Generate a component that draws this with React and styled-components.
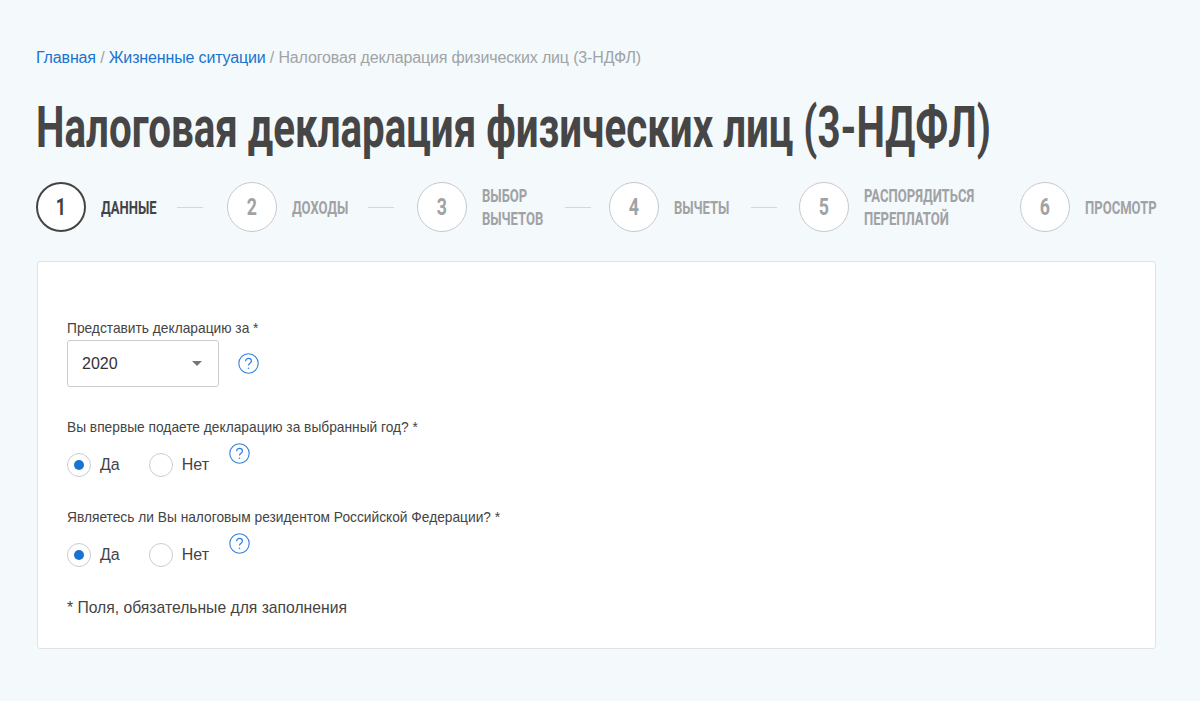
import React from "react";
import styled, { createGlobalStyle } from "styled-components";

const Global = createGlobalStyle`
  html, body { margin: 0; padding: 0; background: #f4f9fc; }
  body { font-family: "Liberation Sans", Arial, sans-serif; color: #444; }
`;
const Page = styled.div`
  width: 1200px; height: 701px; box-sizing: border-box; overflow: hidden;
  padding: 48px 44px 0 36px; background: #f4f9fc;
`;
const Crumbs = styled.nav`
  font-size: 16px; line-height: 18px; color: #a0a4a6; white-space: nowrap; letter-spacing: -0.15px;
  padding-top: 1px;
`;
const Crumb = styled.a`color: #1a73d0; text-decoration: none;`;
const TitleBox = styled.div`margin-top: 29px; height: 64px;`;
const Title = styled.h1`
  margin: 0; display: inline-block; font-family: Roboto, "Liberation Sans", sans-serif;
  font-weight: 700; font-size: 57px; line-height: 64px; color: #464646; white-space: nowrap;
  transform: scaleX(0.707); transform-origin: left center;
`;
const Steps = styled.ol`
  list-style: none; margin: 22px 0 0; padding: 0; display: flex; align-items: center; height: 50px;
`;
const Step = styled.li`display: flex; align-items: center; margin-right: ${p => p.$mr || 0}px;`;
const Circle = styled.span`
  width: 50px; height: 50px; box-sizing: border-box; border-radius: 50%; flex: none;
  display: flex; align-items: center; justify-content: center; background: #fff;
  border: ${p => p.$active ? "2px solid #444" : "1px solid #c6c9cb"};
  color: ${p => p.$active ? "#444" : "#a0a2a4"};
`;
const Digit = styled.span`
  font-family: Roboto, "Liberation Sans", sans-serif; font-weight: 700; font-size: 24px;
  transform: scaleX(0.74);
`;
const StepLabel = styled.span`
  display: block; margin-left: 15px; width: ${p => p.$w}px; flex: none;
  font-family: Roboto, "Liberation Sans", sans-serif;
  font-weight: 700; font-size: 18px; line-height: 23px;
  color: ${p => p.$active ? "#444" : "#a0a2a4"}; white-space: pre;
`;
const StepText = styled.span`
  display: inline-block; transform: scaleX(0.725); transform-origin: left center;
`;
const Connector = styled.span`
  width: 26px; height: 1px; background: #d4d8da; margin: 0 ${p => p.$r}px 0 ${p => p.$l}px; flex: none;
`;
const Card = styled.section`
  margin: 29px 0 0 1px; height: 388px; box-sizing: border-box; background: #fff;
  border: 1px solid #dfe3e6; border-radius: 3px; padding: 58px 29px 0;
`;
const Label = styled.div`font-size: 13.75px; line-height: 17px; color: #444;`;
const SelectRow = styled.div`display: flex; align-items: center; gap: 19px; margin-top: 3px;`;
const Select = styled.div`
  width: 152px; height: 47px; box-sizing: border-box; border: 1px solid #c9cdd0; border-radius: 3px;
  display: flex; align-items: center; justify-content: space-between; padding: 0 15px 0 14px;
  font-size: 16px; color: #333; background: #fff;
`;
const Caret = styled.span`
  width: 0; height: 0; border-left: 5px solid transparent; border-right: 5px solid transparent;
  border-top: 5px solid #777; margin-right: 1px;
`;
const Group = styled.div`margin-top: ${p => p.$mt}px;`;
const RadioRow = styled.div`display: flex; align-items: flex-start; margin-top: 17px; height: 30px;`;
const Radio = styled.label`
  display: flex; align-items: center; font-size: 16px; line-height: 24px; color: #444;
  margin-right: ${p => p.$mr}px;
`;
const Dot = styled.span`
  width: 24px; height: 24px; box-sizing: border-box; border-radius: 50%; border: 1px solid #c9cdd0;
  background: #fff; margin-right: 9px; display: flex; align-items: center; justify-content: center;
  &::after { content: ""; width: 10px; height: 10px; border-radius: 50%; background: ${p => p.$on ? "#1a73d0" : "transparent"}; }
`;
const HelpWrap = styled.span`display: inline-flex; margin: ${p => p.$m || 0}; flex: none;`;
const Note = styled.p`margin: 25px 0 0; font-size: 15.7px; line-height: 20px; color: #444;`;

const Help = ({ m }) => (
  <HelpWrap $m={m}>
    <svg width="21" height="21" viewBox="0 0 21 21" fill="none">
      <circle cx="10.5" cy="10.5" r="9.7" stroke="#2f80dc" strokeWidth="1.1" />
      <path d="M7.6 8.2c0-1.7 1.3-2.8 2.9-2.8s2.9 1 2.9 2.6c0 2.3-2.9 2.3-2.9 4.6" stroke="#2f80dc" strokeWidth="1.2" />
      <circle cx="10.5" cy="15.3" r=".8" fill="#2f80dc" />
    </svg>
  </HelpWrap>
);

const steps = [
  { n: 1, t: "ДАННЫЕ", w: 55, l: 21, r: 24 },
  { n: 2, t: "ДОХОДЫ", w: 56, l: 20, r: 23 },
  { n: 3, t: "ВЫБОР\nВЫЧЕТОВ", w: 62, l: 21, r: 18 },
  { n: 4, t: "ВЫЧЕТЫ", w: 56, l: 21, r: 22 },
  { n: 5, t: "РАСПОРЯДИТЬСЯ\nПЕРЕПЛАТОЙ", w: 112, mr: 44 },
  { n: 6, t: "ПРОСМОТР", w: 70 },
];

const YesNo = () => (
  <RadioRow>
    <Radio $mr={29}><Dot $on />Да</Radio>
    <Radio $mr={20}><Dot />Нет</Radio>
    <Help m="-10px 0 0 0" />
  </RadioRow>
);

export default function App() {
  return (
    <Page>
      <Global />
      <Crumbs>
        <Crumb href="#">Главная</Crumb> / <Crumb href="#">Жизненные ситуации</Crumb> / Налоговая декларация физических лиц (3-НДФЛ)
      </Crumbs>
      <TitleBox>
        <Title>Налоговая декларация физических лиц (3-НДФЛ)</Title>
      </TitleBox>
      <Steps>
        {steps.map((s, i) => (
          <React.Fragment key={s.n}>
            <Step $mr={s.mr}>
              <Circle $active={i === 0}><Digit>{s.n}</Digit></Circle>
              <StepLabel $active={i === 0} $w={s.w}><StepText>{s.t}</StepText></StepLabel>
            </Step>
            {s.l && <Connector $l={s.l} $r={s.r} />}
          </React.Fragment>
        ))}
      </Steps>
      <Card>
        <Label>Представить декларацию за *</Label>
        <SelectRow>
          <Select>2020<Caret /></Select>
          <Help />
        </SelectRow>
        <Group $mt={32}>
          <Label>Вы впервые подаете декларацию за выбранный год? *</Label>
          <YesNo />
        </Group>
        <Group $mt={26}>
          <Label>Являетесь ли Вы налоговым резидентом Российской Федерации? *</Label>
          <YesNo />
        </Group>
        <Note>* Поля, обязательные для заполнения</Note>
      </Card>
    </Page>
  );
}
